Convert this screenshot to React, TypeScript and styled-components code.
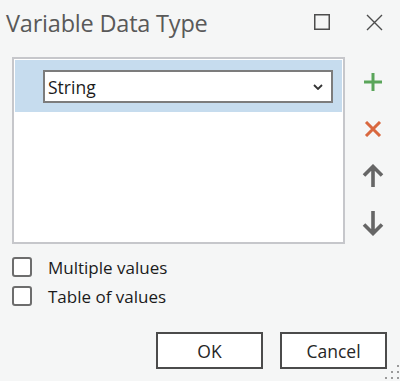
import React, { useState } from "react";
import styled, { createGlobalStyle } from "styled-components";

const GlobalStyle = createGlobalStyle`
  html, body {
    margin: 0;
    padding: 0;
    background: #f5f6f6;
    font-family: "Open Sans", "Noto Sans", Arial, sans-serif;
    color: #1f1f1f;
  }
`;

const Dialog = styled.div`
  position: relative;
  width: 400px;
  height: 381px;
  overflow: hidden;
  background: #f5f6f6;
`;

const TitleBar = styled.div`
  display: flex;
  align-items: center;
  height: 44px;
  padding-left: 6px;
`;

const Title = styled.div`
  flex: 1;
  font-size: 23.5px;
  color: #595959;
  letter-spacing: -0.2px;
  margin-top: 1px;
`;

const WinButton = styled.div`
  width: 52px;
  height: 44px;
  display: flex;
  align-items: center;
  justify-content: center;
`;

const Body = styled.div`
  display: flex;
  padding: 13px 0 0 12px;
`;

const ListBox = styled.div`
  width: 327px;
  height: 181px;
  border: 2px solid #c6c7cb;
  background: #fff;
  padding: 1px;
  box-sizing: content-box;
`;

const Row = styled.div<{ selected?: boolean }>`
  height: 52px;
  box-sizing: border-box;
  padding: 10px 9px 9px 28px;
  background: ${(p) => (p.selected ? "#c6dcee" : "transparent")};
`;

const Dropdown = styled.div`
  height: 33px;
  box-sizing: border-box;
  border: 2px solid #7c7c7c;
  background: #fff;
  display: flex;
  align-items: center;
  padding: 0 8px 0 3px;
  font-size: 17.5px;
  color: #1b1b1b;
`;

const DropText = styled.span`
  flex: 1;
`;

const Tools = styled.div`
  display: flex;
  flex-direction: column;
  align-items: center;
  width: 22px;
  margin-left: 17px;
  padding-top: 14px;
  gap: 25px;
`;

const ToolIcon = styled.div`
  width: 22px;
  height: 22px;
  display: flex;
  align-items: center;
  justify-content: center;
`;

const Checks = styled.div`
  display: flex;
  flex-direction: column;
  gap: 9px;
  padding: 13px 0 0 12px;
`;

const CheckRow = styled.label`
  display: flex;
  align-items: center;
  height: 20px;
  font-size: 17px;
  color: #1b1b1b;
  cursor: pointer;
`;

const Box = styled.span<{ checked?: boolean }>`
  width: 20px;
  height: 20px;
  box-sizing: border-box;
  border: 2px solid #6d6d6d;
  border-radius: 3px;
  background: ${(p) => (p.checked ? "#0c64c0" : "#fff")};
  margin-right: 16px;
`;

const Footer = styled.div`
  display: flex;
  justify-content: flex-end;
  gap: 17px;
  padding: 26px 13px 0 0;
`;

const Button = styled.button`
  width: 107px;
  height: 37px;
  border: 2px solid #4b4b4b;
  background: #fff;
  font-family: "Open Sans", "Noto Sans", Arial, sans-serif;
  font-size: 17.5px;
  color: #262626;
  padding: 0;
`;

const Grip = styled.div`
  position: absolute;
  right: 1px;
  bottom: 5px;
  width: 14px;
  height: 14px;
`;

function App() {
  const [multi, setMulti] = useState(false);
  const [table, setTable] = useState(false);

  return (
    <Dialog>
      <GlobalStyle />
      <TitleBar>
        <Title>Variable Data Type</Title>
        <WinButton>
          <svg width="16" height="16" viewBox="0 0 16 16">
            <rect x="0.75" y="0.75" width="14.5" height="14.5" fill="none" stroke="#4d4d4d" strokeWidth="1.5" />
          </svg>
        </WinButton>
        <WinButton>
          <svg width="17" height="17" viewBox="0 0 17 17">
            <path d="M1 1 L16 16 M16 1 L1 16" stroke="#4d4d4d" strokeWidth="1.4" fill="none" />
          </svg>
        </WinButton>
      </TitleBar>

      <Body>
        <ListBox>
          <Row selected>
            <Dropdown>
              <DropText>String</DropText>
              <svg width="10" height="6" viewBox="0 0 10 6">
                <path d="M1 1 L5 5 L9 1" stroke="#333" strokeWidth="1.8" fill="none" />
              </svg>
            </Dropdown>
          </Row>
        </ListBox>
        <Tools>
          <ToolIcon>
            <svg width="20" height="20" viewBox="0 0 20 20">
              <path d="M10 1 V19 M1 10 H19" stroke="#5aa55a" strokeWidth="3" fill="none" />
            </svg>
          </ToolIcon>
          <ToolIcon>
            <svg width="18" height="16" viewBox="0 0 18 16">
              <path d="M2 1 L16 15 M16 1 L2 15" stroke="#d9683f" strokeWidth="3" fill="none" />
            </svg>
          </ToolIcon>
          <ToolIcon>
            <svg width="22" height="24" viewBox="0 0 22 24">
              <path d="M11 23 V3 M2 11.5 L11 2.5 L20 11.5" stroke="#666" strokeWidth="3.6" fill="none" />
            </svg>
          </ToolIcon>
          <ToolIcon>
            <svg width="22" height="26" viewBox="0 0 22 26">
              <path d="M11 1 V22 M2 14.5 L11 23.5 L20 14.5" stroke="#666" strokeWidth="3.6" fill="none" />
            </svg>
          </ToolIcon>
        </Tools>
      </Body>

      <Checks>
        <CheckRow onClick={() => setMulti(!multi)}>
          <Box checked={multi} />
          Multiple values
        </CheckRow>
        <CheckRow onClick={() => setTable(!table)}>
          <Box checked={table} />
          Table of values
        </CheckRow>
      </Checks>

      <Footer>
        <Button>OK</Button>
        <Button>Cancel</Button>
      </Footer>

      <Grip>
        <svg width="14" height="14" viewBox="0 0 14 14">
          <rect x="12" y="0" width="2" height="2" fill="#9a9a9a" />
          <rect x="6" y="6" width="2" height="2" fill="#9a9a9a" />
          <rect x="12" y="6" width="2" height="2" fill="#9a9a9a" />
          <rect x="0" y="12" width="2" height="2" fill="#9a9a9a" />
          <rect x="6" y="12" width="2" height="2" fill="#9a9a9a" />
          <rect x="12" y="12" width="2" height="2" fill="#9a9a9a" />
        </svg>
      </Grip>
    </Dialog>
  );
}

export default App;
